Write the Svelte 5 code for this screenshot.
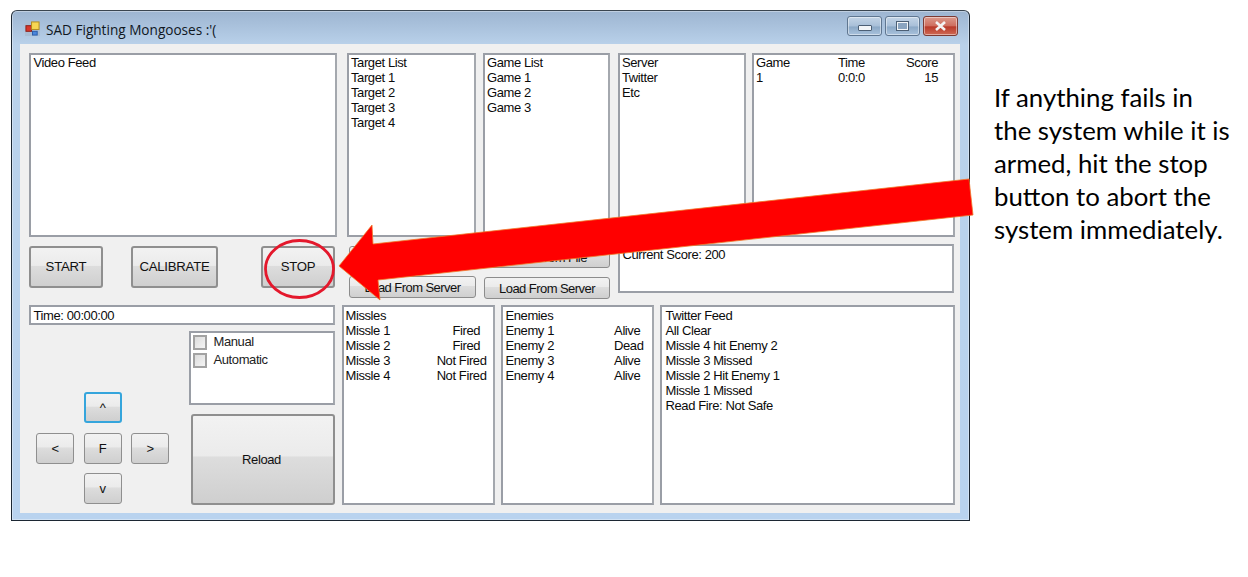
<script>
  const targets = ['Target List', 'Target 1', 'Target 2', 'Target 3', 'Target 4'];
  const games = ['Game List', 'Game 1', 'Game 2', 'Game 3'];
  const servers = ['Server', 'Twitter', 'Etc'];
  // trailing spaces are in the original strings, the right column is not flush
  const missleRows = [
    ['Missles', ''],
    ['Missle 1', 'Fired  '],
    ['Missle 2', 'Fired  '],
    ['Missle 3', 'Not Fired'],
    ['Missle 4', 'Not Fired']
  ];
  const enemyRows = [
    ['Enemies', ''],
    ['Enemy 1', 'Alive '],
    ['Enemy 2', 'Dead'],
    ['Enemy 3', 'Alive '],
    ['Enemy 4', 'Alive ']
  ];
  const tweets = [
    'Twitter Feed',
    'All Clear',
    'Missle 4 hit Enemy 2',
    'Missle 3 Missed',
    'Missle 2 Hit Enemy 1',
    'Missle 1 Missed',
    'Read Fire: Not Safe'
  ];
  const note = [
    'If anything fails in',
    'the system while it is',
    'armed, hit the stop',
    'button to abort the',
    'system immediately.'
  ];
</script>

<div class="page">
  <div class="window">
    <div class="titlebar">
      <svg class="appicon" viewBox="0 0 16 16" width="16" height="16" aria-hidden="true">
        <rect x="0" y="0" width="16" height="16" fill="#a9bdd4"/>
        <rect x="1" y="5" width="6" height="6" fill="#d8362a" stroke="#8c1c14"/>
        <rect x="7" y="1" width="8" height="8" fill="#f6d653" stroke="#b08a1c"/>
        <rect x="8" y="11" width="5" height="4" fill="#4a86dc" stroke="#2a5aa8"/>
      </svg>
      <span class="title">SAD Fighting Mongooses :'(</span>
      <div class="caption">
        <div class="capbtn"><span class="min"></span></div>
        <div class="capbtn"><span class="max"></span></div>
        <div class="capbtn close">
          <svg viewBox="0 0 12 10" width="13" height="10" aria-hidden="true">
            <path d="M1.5 1 L10.5 9 M10.5 1 L1.5 9" stroke="#f4f4f4" stroke-width="2.6"/>
          </svg>
        </div>
      </div>
    </div>

    <div class="client">
      <div class="row top">
        <div class="box video">Video Feed</div>
        <div class="box target">{#each targets as t}<div>{t}</div>{/each}</div>
        <div class="box game">{#each games as t}<div>{t}</div>{/each}</div>
        <div class="box server">{#each servers as t}<div>{t}</div>{/each}</div>
        <div class="box scores">
          <div class="scoreline"><span>Game</span><span>Time</span><span>Score</span></div>
          <div class="scoreline"><span>1</span><span>0:0:0</span><span>15</span></div>
        </div>
      </div>

      <div class="row mid">
        <div class="controls">
          <button class="btn big start">START</button>
          <button class="btn big calibrate">CALIBRATE</button>
          <button class="btn big stop">STOP</button>
        </div>
        <div class="loads first">
          <button class="btn load">Load From File</button>
          <button class="btn load">Load From Server</button>
        </div>
        <div class="loads second">
          <button class="btn load">Load From File</button>
          <button class="btn load">Load From Server</button>
        </div>
        <div class="box current">Current Score: 200</div>
      </div>

      <div class="row bottom">
        <div class="left">
          <div class="box time">Time: 00:00:00</div>
          <div class="lower">
            <div class="pad">
              <button class="btn arrow up focus">^</button>
              <button class="btn arrow lt">&lt;</button>
              <button class="btn arrow fire">F</button>
              <button class="btn arrow rt">&gt;</button>
              <button class="btn arrow dn">v</button>
            </div>
            <div class="side">
              <div class="box modes">
                <label><span class="check"></span>Manual</label>
                <label><span class="check"></span>Automatic</label>
              </div>
              <button class="btn reload">Reload</button>
            </div>
          </div>
        </div>
        <div class="box missiles">
          {#each missleRows as r}
            <div class="pair"><span>{r[0]}</span><span>{r[1]}</span></div>
          {/each}
        </div>
        <div class="box enemies">
          {#each enemyRows as r}
            <div class="pair"><span>{r[0]}</span><span>{r[1]}</span></div>
          {/each}
        </div>
        <div class="box feed">{#each tweets as t}<div>{t}</div>{/each}</div>
      </div>
    </div>
  </div>

  <div class="note">{#each note as line}<div>{line}</div>{/each}</div>

  <!-- callout drawn over the form -->
  <svg class="callout" viewBox="0 0 1248 577" width="1248" height="577" aria-hidden="true">
    <ellipse cx="299.5" cy="269" rx="34" ry="28.5" fill="none" stroke="#e4182c" stroke-width="2.8"/>
    <polygon points="969,179 973,215 378,280 380,300 339,266 372,225 373,244" fill="#ff0000" stroke="#f0782a" stroke-width="0.8"/>
  </svg>
</div>

<style>
  :global(body) {
    margin: 0;
    background: #fff;
  }

  .page {
    position: relative;
    display: flex;
    align-items: flex-start;
    width: 1248px;
    height: 577px;
    overflow: hidden;
    font-family: "Liberation Sans", Arial, sans-serif;
  }

  .window {
    box-sizing: border-box;
    width: 959px;
    height: 511px;
    margin: 10px 0 0 11px;
    flex: none;
    display: flex;
    flex-direction: column;
    border: 1px solid #1c2733;
    border-top-color: #3a4550;
    border-radius: 6px 6px 0 0;
    background: linear-gradient(180deg, #9db5d1 0, #b9d1ea 34px, #b9d3ef 100%);
    box-shadow: inset 0 0 0 1px rgba(255, 255, 255, .35);
  }

  .titlebar {
    height: 33px;
    flex: none;
    display: flex;
    align-items: center;
    padding: 0 11px 0 13px;
  }

  .appicon {
    width: 15px;
    height: 15px;
    margin-top: 2px;
  }

  .title {
    margin: 4px 0 0 6px;
    font-family: "Open Sans", sans-serif;
    font-size: 13.6px;
    color: #10181f;
  }

  .caption {
    margin-left: auto;
    margin-top: -4px;
    display: flex;
    gap: 3px;
  }

  .capbtn {
    box-sizing: border-box;
    width: 35px;
    height: 20px;
    display: flex;
    align-items: center;
    justify-content: center;
    border: 1px solid #5f7690;
    border-radius: 3px;
    background: linear-gradient(180deg, #c3d4e6 0, #a8bfd8 50%, #8ba8c6 55%, #a9c2dc 100%);
    box-shadow: inset 0 0 0 1px rgba(255, 255, 255, .45);
  }

  .capbtn.close {
    border-color: #7c3a33;
    background: linear-gradient(180deg, #dc9a8c 0, #cf6f60 48%, #b93a2a 55%, #cf6a55 100%);
  }

  .min {
    width: 12px;
    height: 4px;
    margin-top: 5px;
    background: #f2f5f8;
    border: 1px solid #4c5f75;
    border-radius: 1px;
  }

  .max {
    box-sizing: border-box;
    width: 13px;
    height: 10px;
    border: 2px solid #f2f5f8;
    outline: 1px solid #4c5f75;
    outline-offset: -1px;
    background: #8aa4c0;
  }

  .client {
    flex: none;
    box-sizing: border-box;
    width: 940px;
    height: 469px;
    margin-left: 8px;
    padding: 9px 0 0 8.5px;
    background: #f0f0f0;
    font-size: 13px;
    letter-spacing: -0.4px;
    line-height: 15px;
    color: #0b0b0b;
  }

  .row {
    display: flex;
    align-items: flex-start;
  }

  .top {
    height: 184px;
  }

  .mid {
    height: 54px;
    margin-top: 7px;
  }

  .bottom {
    margin-top: 7px;
    height: 200px;
  }

  .box {
    box-sizing: border-box;
    flex: none;
    background: #fff;
    border: 2px solid #9a9ea6;
    border-right-color: #a4a8ae;
    padding: 0 2px;
    overflow: hidden;
  }

  .top .box {
    height: 184px;
    padding-top: 0;
  }

  .video {
    width: 308px;
    padding-left: 3px !important;
  }

  .target {
    width: 129px;
    margin-left: 10.5px;
  }

  .game {
    width: 127px;
    margin-left: 7px;
  }

  .server {
    width: 128px;
    margin-left: 8px;
  }

  .scores {
    width: 203px;
    margin-left: 6px;
    padding: 0 15px 0 2px !important;
  }

  .scoreline {
    display: grid;
    grid-template-columns: 82px 55px 1fr;
  }

  .scoreline span:last-child {
    text-align: right;
  }

  .controls {
    width: 318.5px;
    display: flex;
    flex: none;
    padding: 2px 0 0 0.5px;
    box-sizing: border-box;
  }

  .btn {
    box-sizing: border-box;
    padding: 0;
    font: inherit;
    letter-spacing: inherit;
    color: #111;
    border: 2px solid #8f8f8f;
    border-radius: 3px;
    background: linear-gradient(180deg, #f2f2f2 0, #ebebeb 46%, #dddddd 47%, #cfcfcf 100%);
  }

  .big {
    height: 42px;
    padding-bottom: 1px;
    font-size: 13.2px;
    letter-spacing: -0.25px;
  }

  .start {
    width: 74px;
  }

  .calibrate {
    width: 87px;
    margin-left: 28px;
  }

  .stop {
    width: 74px;
    margin-left: 43px;
  }

  .loads {
    flex: none;
    display: flex;
    flex-direction: column;
  }

  .first {
    width: 127px;
    margin-left: 2px;
    padding-top: 2px;
    gap: 8px;
  }

  .second {
    width: 126px;
    margin-left: 8px;
    padding-top: 2px;
    gap: 9px;
  }

  .load {
    height: 22px;
    letter-spacing: -0.55px;
    border-width: 1px;
    border-color: #8c8c8c;
  }

  .current {
    width: 336px;
    height: 49px;
    margin-left: 8px;
    padding: 1px 0 0 2.5px !important;
  }

  .left {
    width: 307px;
    flex: none;
  }

  .time {
    height: 20px;
    width: 306px;
    padding: 1px 3px !important;
    line-height: 15px;
  }

  .lower {
    display: flex;
    margin-top: 6px;
  }

  .pad {
    width: 160px;
    height: 174px;
    flex: none;
    display: grid;
    grid-template-columns: repeat(3, 38px);
    grid-template-rows: repeat(3, 31px);
    column-gap: 9.5px;
    row-gap: 9.5px;
    padding: 61px 0 0 7.5px;
    box-sizing: border-box;
  }

  .arrow {
    width: 38px;
    height: 31px;
    border-width: 1.5px;
  }

  .up { grid-column: 2; grid-row: 1; }
  .lt { grid-column: 1; grid-row: 2; }
  .fire { grid-column: 2; grid-row: 2; }
  .rt { grid-column: 3; grid-row: 2; }
  .dn { grid-column: 2; grid-row: 3; }

  .focus {
    border: 2px solid #35a5dc;
  }

  .side {
    flex: none;
    width: 146px;
  }

  .modes {
    width: 146px;
    height: 74px;
    padding: 1px 0 0 2px !important;
    display: flex;
    flex-direction: column;
    gap: 3px;
  }

  .modes label {
    display: flex;
    align-items: flex-start;
    height: 15px;
    color: #222;
  }

  .check {
    box-sizing: border-box;
    width: 14px;
    height: 15px;
    margin: 1px 7px 0 0;
    border: 2px solid #a2a2a2;
    background: linear-gradient(135deg, #dcdcdc, #f4f4f4);
  }

  .reload {
    display: block;
    width: 144px;
    height: 91px;
    margin: 9px 0 0 2px;
    padding-right: 2px;
  }

  .missiles {
    width: 153px;
    height: 200px;
    margin-left: 6px;
    padding: 1px 6px 0 2px !important;
  }

  .enemies {
    width: 153px;
    height: 200px;
    margin-left: 6px;
    padding: 1px 8px 0 3px !important;
  }

  .feed {
    width: 295px;
    height: 200px;
    margin-left: 6px;
    padding: 1px 0 0 4px !important;
  }

  .pair {
    display: flex;
    justify-content: space-between;
    white-space: pre;
  }

  .note {
    margin: 81px 0 0 24px;
    flex: none;
    font-family: Lato, sans-serif;
    font-size: 25.8px;
    line-height: 33px;
    color: #000;
    white-space: nowrap;
  }

  .callout {
    position: absolute;
    left: 0;
    top: 0;
    pointer-events: none;
  }
</style>
